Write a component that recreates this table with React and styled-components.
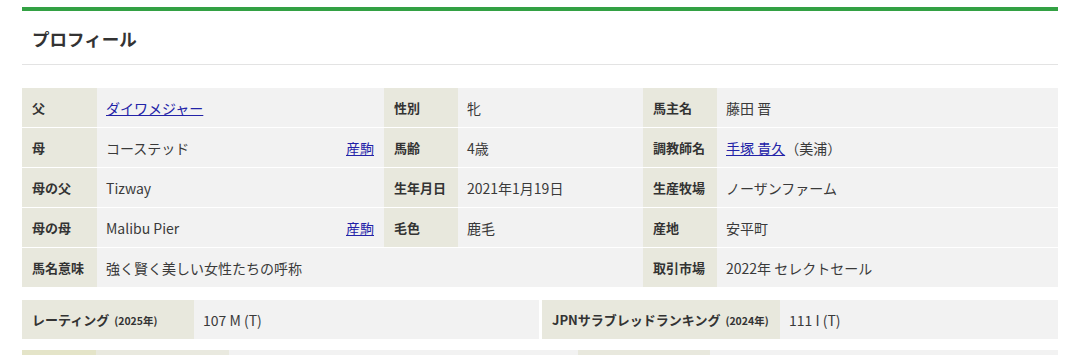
import React from 'react'
import styled, { createGlobalStyle } from 'styled-components'

const GlobalStyle = createGlobalStyle`
  body {
    margin: 0;
    background: #fff;
    font-family: "Noto Sans CJK JP", "Noto Sans", sans-serif;
    color: #333;
  }
`

const Page = styled.div`
  padding: 7px 22px 0 22px;
  height: 355px;
  overflow: hidden;
  box-sizing: border-box;
`

const Section = styled.section`
  border-top: 4px solid #33a144;
`

const Header = styled.div`
  height: 54px;
  display: flex;
  align-items: center;
  padding: 2px 0 0 10px;
  box-sizing: border-box;
  border-bottom: 1px solid #e3e3e3;
`

const Title = styled.h2`
  margin: 0;
  font-size: 17.5px;
  font-weight: 700;
  color: #333;
`

const Table = styled.table`
  width: 100%;
  border-collapse: collapse;
  table-layout: fixed;
  margin-top: ${p => p.$top || 0}px;
`

const Th = styled.th`
  background: ${p => p.$bg || '#e8e8dd'};
  font-size: 13px;
  font-weight: 700;
  text-align: left;
  padding: 0 10px;
  height: 39px;
  border-bottom: 1px solid #fff;
  white-space: nowrap;
  color: #333;
`

const Td = styled.td`
  background: ${p => p.$bg || '#f2f2f2'};
  font-size: 14px;
  padding: 0 10px 0 9px;
  height: 39px;
  border-bottom: 1px solid #fff;
  white-space: nowrap;
  color: #3a3a3a;
`

const Gap = styled.td`
  background: #fff;
  padding: 0;
`

const ValueRow = styled.div`
  display: flex;
  justify-content: space-between;
  align-items: center;
`

const Link = styled.a`
  color: #2323a8;
  text-decoration: underline;
`

const Year = styled.span`
  font-size: 10.5px;
  font-weight: 700;
  margin-left: 5px;
`

const ShortRow = styled.tr`
  td, th { height: 10px; }
`

const cols = [75, 287, 74, 185, 74, 341]

function Cols({ widths }) {
  return (
    <colgroup>
      {widths.map((w, i) => <col key={i} style={{ width: w }} />)}
    </colgroup>
  )
}

export default function App() {
  return (
    <>
      <GlobalStyle />
      <Page>
        <Section>
          <Header>
            <Title>プロフィール</Title>
          </Header>

          <Table $top={23}>
            <Cols widths={cols} />
            <tbody>
              <tr>
                <Th>父</Th>
                <Td><Link href="#">ダイワメジャー</Link></Td>
                <Th>性別</Th>
                <Td>牝</Td>
                <Th>馬主名</Th>
                <Td>藤田 晋</Td>
              </tr>
              <tr>
                <Th>母</Th>
                <Td>
                  <ValueRow>
                    <span>コーステッド</span>
                    <Link href="#">産駒</Link>
                  </ValueRow>
                </Td>
                <Th>馬齢</Th>
                <Td>4歳</Td>
                <Th>調教師名</Th>
                <Td><Link href="#">手塚 貴久</Link>（美浦）</Td>
              </tr>
              <tr>
                <Th>母の父</Th>
                <Td>Tizway</Td>
                <Th>生年月日</Th>
                <Td>2021年1月19日</Td>
                <Th>生産牧場</Th>
                <Td>ノーザンファーム</Td>
              </tr>
              <tr>
                <Th>母の母</Th>
                <Td>
                  <ValueRow>
                    <span>Malibu Pier</span>
                    <Link href="#">産駒</Link>
                  </ValueRow>
                </Td>
                <Th>毛色</Th>
                <Td>鹿毛</Td>
                <Th>産地</Th>
                <Td>安平町</Td>
              </tr>
              <tr>
                <Th>馬名意味</Th>
                <Td colSpan={3}>強く賢く美しい女性たちの呼称</Td>
                <Th>取引市場</Th>
                <Td>2022年 セレクトセール</Td>
              </tr>
            </tbody>
          </Table>

          <Table $top={12}>
            <Cols widths={[172, 345, 3, 238, 278]} />
            <tbody>
              <tr>
                <Th>レーティング<Year>(2025年)</Year></Th>
                <Td>107 M (T)</Td>
                <Gap />
                <Th>JPNサラブレッドランキング<Year>(2024年)</Year></Th>
                <Td>111 I (T)</Td>
              </tr>
            </tbody>
          </Table>

          <Table $top={10}>
            <Cols widths={[74, 133, 349, 132, 348]} />
            <tbody>
              <ShortRow>
                <Th $bg="#e4e4c8" />
                <Td $bg="#e9e9df" />
                <Td />
                <Th />
                <Td />
              </ShortRow>
            </tbody>
          </Table>
        </Section>
      </Page>
    </>
  )
}
